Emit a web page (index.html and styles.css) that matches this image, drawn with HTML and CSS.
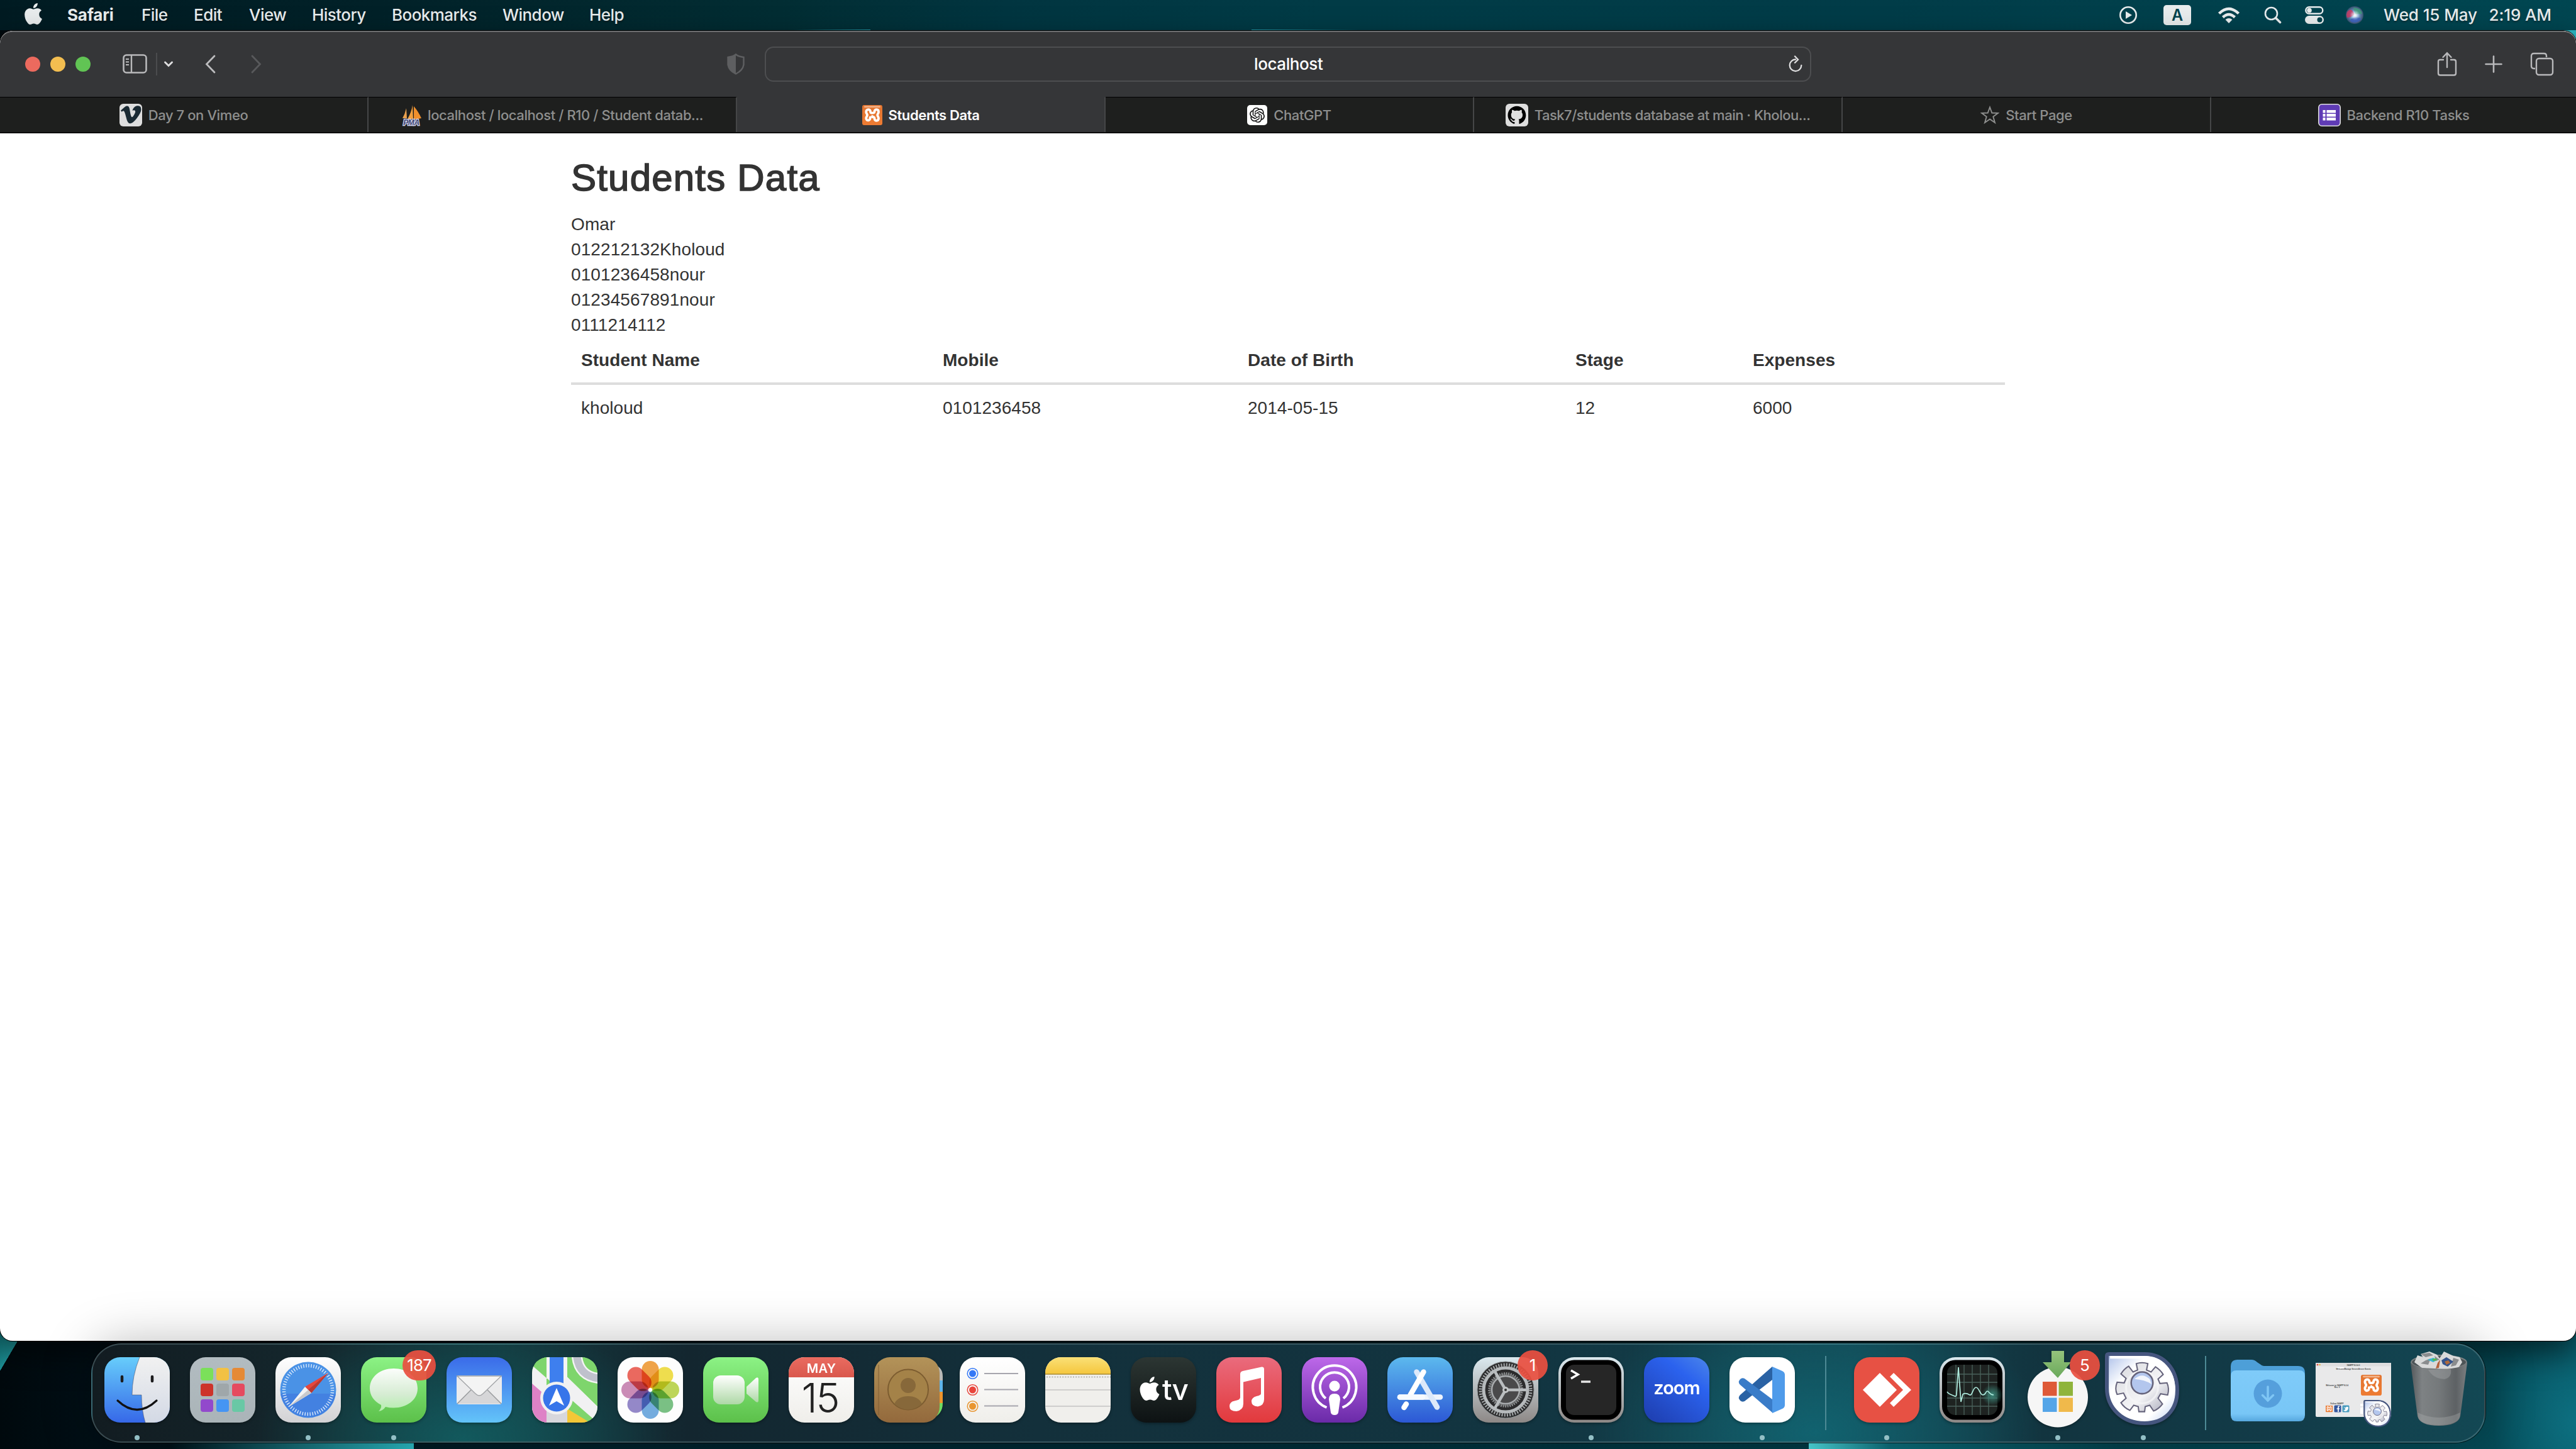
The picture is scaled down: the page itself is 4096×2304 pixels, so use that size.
FILE: index.html
```html
<!DOCTYPE html>
<html lang="en">
<head>
<meta charset="utf-8">
<title>Students Data</title>
<link rel="stylesheet" href="styles.css">
</head>
<body>
<svg class="defs" width="0" height="0" aria-hidden="true">
  <defs>
    <linearGradient id="g-blue" x2="0" y2="1"><stop stop-color="#67cdfb"/><stop offset="1" stop-color="#3668e8"/></linearGradient>
    <linearGradient id="g-mail" x2="0" y2="1"><stop stop-color="#3a6be9"/><stop offset="1" stop-color="#63c4f9"/></linearGradient>
    <linearGradient id="g-face" x2="0" y2="1"><stop stop-color="#f1f1f1"/><stop offset="1" stop-color="#d3d9e5"/></linearGradient>
    <linearGradient id="g-white" x2="0" y2="1"><stop stop-color="#fff"/><stop offset="1" stop-color="#d2d2d4"/></linearGradient>
    <linearGradient id="g-green" x2="0" y2="1"><stop stop-color="#8cf285"/><stop offset="1" stop-color="#5cc04a"/></linearGradient>
    <linearGradient id="g-bubble" x2="0" y2="1"><stop stop-color="#fbfdfb"/><stop offset=".6" stop-color="#d6ecd3"/><stop offset="1" stop-color="#b4eeac"/></linearGradient>
    <linearGradient id="g-cam" x2="0" y2="1"><stop stop-color="#fff"/><stop offset="1" stop-color="#aed8a6"/></linearGradient>
    <linearGradient id="g-red" x2="0" y2="1"><stop stop-color="#ea6b60"/><stop offset="1" stop-color="#d9584d"/></linearGradient>
    <linearGradient id="g-book" x2="0" y2="1"><stop stop-color="#b39359"/><stop offset="1" stop-color="#93693c"/></linearGradient>
    <linearGradient id="g-paper" x2="0" y2="1"><stop stop-color="#fff"/><stop offset="1" stop-color="#efeeea"/></linearGradient>
    <linearGradient id="g-notes" x2="0" y2="1"><stop stop-color="#fae077"/><stop offset="1" stop-color="#f5c63c"/></linearGradient>
    <linearGradient id="g-tv" x2="0" y2="1"><stop stop-color="#2c3633"/><stop offset="1" stop-color="#0d1213"/></linearGradient>
    <linearGradient id="g-music" x2="0" y2="1"><stop stop-color="#ea6b7d"/><stop offset="1" stop-color="#e2393c"/></linearGradient>
    <linearGradient id="g-pod" x2="0" y2="1"><stop stop-color="#bd68e9"/><stop offset="1" stop-color="#6a2aa8"/></linearGradient>
    <linearGradient id="g-app" x2="0" y2="1"><stop stop-color="#5cb9ee"/><stop offset="1" stop-color="#2c58d5"/></linearGradient>
    <linearGradient id="g-rim" x2="0" y2="1"><stop stop-color="#dbe9ef"/><stop offset="1" stop-color="#8d8886"/></linearGradient>
    <linearGradient id="g-zoom" x1="1" y1="0" x2=".2" y2="1"><stop stop-color="#4c86ea"/><stop offset=".35" stop-color="#2b62ee"/><stop offset="1" stop-color="#1f41b4"/></linearGradient>
    <linearGradient id="g-pad" x2="0" y2="1"><stop stop-color="#b2bcc1"/><stop offset="1" stop-color="#aab4b8"/></linearGradient>
    <linearGradient id="g-down" x2="0" y2="1"><stop stop-color="#95c37c"/><stop offset="1" stop-color="#6aa95b"/></linearGradient>
    <linearGradient id="g-fold" x2="0" y2="1"><stop stop-color="#7fcbf9"/><stop offset=".85" stop-color="#78c6f6"/><stop offset="1" stop-color="#57a8df"/></linearGradient>
    <linearGradient id="g-can"><stop stop-color="#55595c"/><stop offset=".2" stop-color="#7e8284"/><stop offset=".5" stop-color="#75797b"/><stop offset=".8" stop-color="#5d6164"/><stop offset="1" stop-color="#7b7f81"/></linearGradient>
    <linearGradient id="g-gear" x2="1" y2="1"><stop stop-color="#d9dade"/><stop offset=".6" stop-color="#f4f4f6"/><stop offset="1" stop-color="#a6a7b8"/></linearGradient>
    <linearGradient id="g-mgr" x2="1" y2="1"><stop stop-color="#a9bde8"/><stop offset=".3" stop-color="#fff"/><stop offset=".75" stop-color="#fff"/><stop offset="1" stop-color="#b4c8ee"/></linearGradient>
    <radialGradient id="g-siri"><stop stop-color="#fff"/><stop offset=".35" stop-color="#7fa9d8"/><stop offset="1" stop-color="#37506f"/></radialGradient>
    <radialGradient id="g-glow"><stop stop-color="#fff"/><stop offset="1" stop-color="#cfe4f5" stop-opacity="0"/></radialGradient>
    <radialGradient id="g-pulse"><stop stop-color="#3c8a7c"/><stop offset="1" stop-color="#3c8a7c" stop-opacity="0"/></radialGradient>
    <linearGradient id="g-xampp" x2="0" y2="1"><stop stop-color="#e27430"/><stop offset="1" stop-color="#ee7c33"/></linearGradient>
    <clipPath id="tile"><rect width="104" height="104" rx="25"/></clipPath>
    <symbol id="apple" viewBox="0 0 24 24"><path d="M12.152 6.896c-.948 0-2.415-1.078-3.96-1.04-2.04.027-3.91 1.183-4.961 3.014-2.117 3.675-.546 9.103 1.519 12.09 1.013 1.454 2.208 3.09 3.792 3.039 1.52-.065 2.09-.987 3.935-.987 1.831 0 2.35.987 3.96.948 1.637-.026 2.676-1.48 3.676-2.948 1.156-1.688 1.636-3.325 1.662-3.415-.039-.013-3.182-1.221-3.22-4.857-.026-3.04 2.48-4.494 2.597-4.559-1.429-2.09-3.623-2.324-4.39-2.376-2-.156-3.675 1.09-4.61 1.09zM15.53 3.83c.843-1.012 1.4-2.427 1.245-3.83-1.207.052-2.662.805-3.532 1.818-.78.896-1.454 2.338-1.273 3.714 1.338.104 2.715-.688 3.559-1.701"/></symbol>
    <symbol id="xampp" viewBox="0 0 32 32">
      <rect width="32" height="32" rx="3" fill="url(#g-xampp)"/><rect x="3" y="1.5" width="26" height="2.5" rx="1" fill="#f3b48a"/>
      <path d="M12.500 19.500C13.500 25.500 6.200 26 6.200 21C6.200 18.500 8 18 8 16S6.200 13.500 6.200 11C6.200 6 13 6 13 10.500C13 12.500 14.500 12.700 16 12.700S19.500 12.500 19.500 10.500C19.500 6 26 6 26 11C26 13.500 24.200 14 24.200 16S26 18.500 26 21C26 26 19.500 26 19.500 21.500C19.500 19.500 18.500 19 16 19V18" fill="none" stroke="#fff" stroke-width="3.800" stroke-linecap="round" stroke-linejoin="round"/>
    </symbol>
    <symbol id="manager" viewBox="0 0 116 114">
      <path d="M6 3H62C92 3 113 26 113 60C113 92 92 111 62 111C28 111 3 88 3 56V6Q3 3 6 3Z" fill="url(#g-mgr)" stroke="#46567f" stroke-width="6"/>
      <path d="M8 8H60C90 8 108 30 108 60" fill="none" stroke="#fff" stroke-width="4"/>
      <g transform="translate(58 55)">
        <path d="M-7-27-9-37Q0-40 9-37L7-27 14-24 21-32Q29-27 33-20L25-13 28-6 39-7Q43 2 40 12L29 10 25 17 32 26Q26 34 18 37L12 28 5 30 4 38-5 38-6 30-13 28-19 36Q-28 32-33 24L-25 17-29 9-39 11Q-43 2-39-8L-28-7-25-14-33-21Q-28-29-21-33L-14-24Z" fill="url(#g-gear)" stroke="#66647c" stroke-width="2"/>
        <circle r="25" fill="none" stroke="#f6f6f8" stroke-width="3" opacity=".7"/>
        <circle cy="-7" r="17" fill="#b3c6ed" stroke="#66647c" stroke-width="2.500"/>
        <path d="M-12-13Q0-24 12-13L15-5Q4-12-12-13Z" fill="#f2f5fc"/>
      </g>
    </symbol>
  </defs>
</svg>

<header class="menubar">
  <svg class="menubar-apple" width="34" height="34"><use href="#apple" fill="#e8eced"/></svg>
  <nav class="menus">
    <span class="menu-app">Safari</span><span>File</span><span>Edit</span><span>View</span><span>History</span><span>Bookmarks</span><span>Window</span><span>Help</span>
  </nav>
  <div class="status">
    <svg width="30" height="30" viewBox="0 0 30 30"><circle cx="15" cy="15" r="12.700" fill="none" stroke="#e8eced" stroke-width="2.600"/><path d="M11 9l10 6-10 6z" fill="#e8eced"/></svg>
    <span class="input-lang">A</span>
    <svg width="36" height="28" viewBox="0 0 36 28"><g fill="none" stroke="#e8eced" stroke-width="4.500"><path d="M2.500 11.500Q18-3.500 33.500 11.500"/><path d="M8.500 17.500Q18 8.500 27.500 17.500"/></g><path d="M12.500 21.200Q18 16.600 23.500 21.200L18 27z" fill="#e8eced"/></svg>
    <svg width="28" height="28" viewBox="0 0 28 28"><circle cx="11.500" cy="11.500" r="9.500" fill="none" stroke="#e8eced" stroke-width="2.600"/><path d="M18.500 18.500l7 7" stroke="#e8eced" stroke-width="3.600" stroke-linecap="round"/></svg>
    <svg width="30" height="28" viewBox="0 0 30 28"><rect x="1.300" y="1.300" width="27" height="10.400" rx="5.200" fill="none" stroke="#e8eced" stroke-width="2.400"/><circle cx="7" cy="6.500" r="3.800" fill="#e8eced"/><rect y="15" width="30" height="13" rx="6.500" fill="#e8eced"/><circle cx="23.500" cy="21.500" r="4" fill="#02434d"/></svg>
    <svg width="28" height="28" viewBox="0 0 28 28"><circle cx="14" cy="14" r="14" fill="url(#g-siri)"/><path d="M3 8Q9 1 14 13Q8 18 2 18Q0 12 3 8Z" fill="#d2365f" opacity=".8"/><path d="M12 2Q24 2 26 12L15 13Z" fill="#3f9c78" opacity=".8"/><path d="M6 22Q16 14 25 20Q18 28 9 25Z" fill="#3b5fc0" opacity=".8"/><circle cx="14.500" cy="14" r="8" fill="url(#g-glow)"/></svg>
    <span class="clock"><span>Wed 15 May</span><span>2:19 AM</span></span>
  </div>
</header>

<main class="window">
  <div class="toolbar">
    <div class="lights"><i class="light light-close"></i><i class="light light-min"></i><i class="light light-max"></i></div>
    <svg class="tb-sidebar" width="40" height="32" viewBox="0 0 40 32"><rect x="1.500" y="1.500" width="36" height="28" rx="4.500" fill="none" stroke="#b9b9bb" stroke-width="2.600"/><path d="M14 2v27" stroke="#b9b9bb" stroke-width="2.400"/><path d="M5 8h5M5 12.500h5M5 17h5" stroke="#b9b9bb" stroke-width="2"/></svg>
    <i class="tb-rule"></i>
    <svg class="tb-menu" width="16" height="12" viewBox="0 0 16 12"><path d="M2.500 3l5.500 5.500L13.500 3" fill="none" stroke="#dededf" stroke-width="3" stroke-linecap="round"/></svg>
    <svg class="tb-back" width="20" height="32" viewBox="0 0 20 32"><path d="M16 3L3.500 16 16 29" fill="none" stroke="#bcbcbe" stroke-width="2.800" stroke-linecap="round"/></svg>
    <svg class="tb-forward" width="20" height="32" viewBox="0 0 20 32"><path d="M4 3l12.500 13L4 29" fill="none" stroke="#58595b" stroke-width="2.800" stroke-linecap="round"/></svg>
    <svg class="tb-shield" width="28" height="34" viewBox="0 0 28 34"><path d="M14 1.500Q18 5 26.500 6V18Q25 27 14 32.500Q3 27 1.500 18V6Q10 5 14 1.500Z" fill="none" stroke="#5e5f61" stroke-width="2.400"/><path d="M14 1.500V32.500Q3 27 1.500 18V6Q10 5 14 1.500Z" fill="#5e5f61"/></svg>
    <div class="address"><span>localhost</span>
      <svg class="reload" width="24" height="28" viewBox="0 0 24 28"><path d="M12 6.500A9.300 9.300 0 1 0 21.300 16" fill="none" stroke="#dededf" stroke-width="2.300" stroke-linecap="round"/><path d="M11 1.500l5 5.200-5 5" fill="none" stroke="#dededf" stroke-width="2.300" stroke-linecap="round"/></svg>
    </div>
    <div class="tb-actions">
      <svg width="32" height="40" viewBox="0 0 32 40"><path d="M10 13H5Q2 13 2 16V34.500Q2 37.500 5 37.500H27Q30 37.500 30 34.500V16Q30 13 27 13H22M16 25V3M9.500 9L16 2.200 22.500 9" fill="none" stroke="#b9b9bb" stroke-width="2.400" stroke-linecap="round"/></svg>
      <svg width="30" height="30" viewBox="0 0 30 30"><path d="M15 2.500v25M2.500 15h25" stroke="#b9b9bb" stroke-width="2.600" stroke-linecap="round"/></svg>
      <svg width="38" height="38" viewBox="0 0 38 38"><path d="M8 26H6Q2 26 2 22V6Q2 2 6 2H22Q26 2 26 6V8" fill="none" stroke="#b9b9bb" stroke-width="2.400"/><rect x="10" y="10" width="26" height="26" rx="4" fill="none" stroke="#b9b9bb" stroke-width="2.400"/></svg>
    </div>
  </div>
  <div class="tabs">
    <div class="tab"><svg width="36" height="36" viewBox="0 0 36 36"><rect width="36" height="36" rx="6" fill="#dedede"/><path transform="translate(2 1) scale(1.350)" fill="#1a2a33" d="M23.9765 6.4168c-.105 2.338-1.739 5.5429-4.894 9.6088-3.2679 4.247-6.0258 6.3699-8.2898 6.3699-1.409 0-2.578-1.294-3.553-3.881l-1.9179-7.1138c-.719-2.584-1.488-3.878-2.312-3.878-.179 0-.806.378-1.8809 1.132l-1.129-1.457a315.06 315.06 0 003.501-3.1279c1.579-1.368 2.765-2.085 3.5539-2.159 1.867-.18 3.016 1.1 3.447 3.838.465 2.953.789 4.789.971 5.5069.5389 2.45 1.1309 3.674 1.7759 3.674.502 0 1.256-.796 2.265-2.385 1.004-1.589 1.54-2.797 1.612-3.628.144-1.371-.395-2.061-1.614-2.061-.574 0-1.167.121-1.777.391 1.186-3.8679 3.434-5.7568 6.7619-5.6368 2.4729.06 3.6279 1.664 3.4929 4.7969z"/></svg><span>Day 7 on Vimeo</span></div>
    <div class="tab"><svg width="32" height="36" viewBox="0 0 32 36"><path d="M8 7L9 23H2Q6 16 8 7Z" fill="#e9a04e"/><path d="M18 2L19 24H10Q16 14 18 2Z" fill="#f2a03f"/><path d="M20 4Q27 12 32 23L20 25Z" fill="#ef8f2c"/><text x="16" y="34" class="pma">PMA</text></svg><span>localhost / localhost / R10 / Student datab...</span></div>
    <div class="tab tab-active"><svg width="32" height="32"><use href="#xampp"/></svg><span>Students Data</span></div>
    <div class="tab"><svg width="32" height="32" viewBox="0 0 32 32"><rect width="32" height="32" rx="5" fill="#fff"/><path transform="translate(4 4)" fill="#111" d="M22.2819 9.8211a5.9847 5.9847 0 0 0-.5157-4.9108 6.0462 6.0462 0 0 0-6.5098-2.9A6.0651 6.0651 0 0 0 4.9807 4.1818a5.9847 5.9847 0 0 0-3.9977 2.9 6.0462 6.0462 0 0 0 .7427 7.0966 5.98 5.98 0 0 0 .511 4.9107 6.051 6.051 0 0 0 6.5146 2.9001A5.9847 5.9847 0 0 0 13.2599 24a6.0557 6.0557 0 0 0 5.7718-4.2058 5.9894 5.9894 0 0 0 3.9977-2.9001 6.0557 6.0557 0 0 0-.7475-7.0729zm-9.022 12.6081a4.4755 4.4755 0 0 1-2.8764-1.0408l.1419-.0804 4.7783-2.7582a.7948.7948 0 0 0 .3927-.6813v-6.7369l2.02 1.1686a.071.071 0 0 1 .038.052v5.5826a4.504 4.504 0 0 1-4.4945 4.4944zm-9.6607-4.1254a4.4708 4.4708 0 0 1-.5346-3.0137l.142.0852 4.783 2.7582a.7712.7712 0 0 0 .7806 0l5.8428-3.3685v2.3324a.0804.0804 0 0 1-.0332.0615L9.74 19.9502a4.4992 4.4992 0 0 1-6.1408-1.6464zM2.3408 7.8956a4.485 4.485 0 0 1 2.3655-1.9728V11.6a.7664.7664 0 0 0 .3879.6765l5.8144 3.3543-2.0201 1.1685a.0757.0757 0 0 1-.071 0l-4.8303-2.7865A4.504 4.504 0 0 1 2.3408 7.872zm16.5963 3.8558L13.1038 8.364 15.1192 7.2a.0757.0757 0 0 1 .071 0l4.8303 2.7913a4.4944 4.4944 0 0 1-.6765 8.1042v-5.6772a.79.79 0 0 0-.407-.667zm2.0107-3.0231l-.142-.0852-4.7735-2.7818a.7759.7759 0 0 0-.7854 0L9.409 9.2297V6.8974a.0662.0662 0 0 1 .0284-.0615l4.8303-2.7866a4.4992 4.4992 0 0 1 6.6802 4.66zM8.3065 12.863l-2.02-1.1638a.0804.0804 0 0 1-.038-.0567V6.0742a4.4992 4.4992 0 0 1 7.3757-3.4537l-.142.0805L8.704 5.459a.7948.7948 0 0 0-.3927.6813zm1.0976-2.3654l2.602-1.4998 2.6069 1.4998v2.9994l-2.5974 1.4997-2.6067-1.4997Z"/></svg><span>ChatGPT</span></div>
    <div class="tab"><svg width="36" height="36" viewBox="0 0 36 36"><rect width="36" height="36" rx="6" fill="#dedede"/><path transform="translate(3.500 3.500) scale(1.200)" d="M12 .297c-6.630 0-12 5.373-12 12 0 5.303 3.438 9.800 8.205 11.385.6.113.82-.258.82-.577 0-.285-.01-1.040-.015-2.040-3.338.724-4.042-1.610-4.042-1.610C4.422 18.070 3.633 17.700 3.633 17.700c-1.087-.744.084-.729.084-.729 1.205.084 1.838 1.236 1.838 1.236 1.070 1.835 2.809 1.305 3.495.998.108-.776.417-1.305.76-1.605-2.665-.3-5.466-1.332-5.466-5.930 0-1.310.465-2.380 1.235-3.220-.135-.303-.54-1.523.105-3.176 0 0 1.005-.322 3.300 1.230.96-.267 1.980-.399 3-.405 1.020.006 2.040.138 3 .405 2.280-1.552 3.285-1.230 3.285-1.230.645 1.653.24 2.873.12 3.176.765.84 1.230 1.910 1.230 3.220 0 4.610-2.805 5.625-5.475 5.920.42.36.81 1.096.81 2.220 0 1.606-.015 2.896-.015 3.286 0 .315.21.69.825.57C20.565 22.092 24 17.592 24 12.297c0-6.627-5.373-12-12-12"/></svg><span class="t-git">Task7/students database at main · Kholou...</span></div>
    <div class="tab"><svg width="30" height="30" viewBox="0 0 30 30"><path d="M15 2.500L18.300 11.500 28 11.800 20.300 17.600 23 27 15 21.500 7 27 9.700 17.600 2 11.800 11.700 11.500Z" fill="none" stroke="#8e8f8e" stroke-width="1.900"/></svg><span>Start Page</span></div>
    <div class="tab"><svg width="36" height="36" viewBox="0 0 36 36"><rect x=".8" y=".8" width="34.400" height="34.400" rx="5" fill="#5f3bb5" stroke="#dedede" stroke-width="1.600"/><path d="M7.500 10h4v4.500h-4zM7.500 16h4v4.500h-4zM7.500 22h4v4.500h-4zM13.500 10h14.500v4.500H13.500zM13.500 16h14.500v4.500H13.500zM13.500 22h14.500v4.500H13.500z" fill="#fff"/></svg><span>Backend R10 Tasks</span></div>
  </div>
  <section class="page">
    <h2>Students Data</h2>
    <p>Omar<br>012212132Kholoud<br>0101236458nour<br>01234567891nour<br>0111214112</p>
    <table>
      <colgroup><col class="c-name"><col class="c-mobile"><col class="c-birth"><col class="c-stage"><col></colgroup>
      <thead><tr><th>Student Name</th><th>Mobile</th><th>Date of Birth</th><th>Stage</th><th>Expenses</th></tr></thead>
      <tbody><tr><td>kholoud</td><td>0101236458</td><td>2014-05-15</td><td>12</td><td>6000</td></tr></tbody>
    </table>
  </section>
</main>

<footer class="dock">
  <div class="slot running"><svg class="icon" viewBox="0 0 104 104"><g clip-path="url(#tile)"><rect width="104" height="104" fill="url(#g-blue)"/><path d="M56 0Q44 30 44 60H59Q59 84 65 104H104V0Z" fill="url(#g-face)"/></g><path d="M56 0Q44 30 44 60H59Q59 84 65 104" fill="none" stroke="#445" stroke-width="1" opacity=".5"/><path d="M28 31v7M76 31v7" stroke="#1c1c1e" stroke-width="4.500" stroke-linecap="round"/><path d="M21 69Q52 98 83 69" fill="none" stroke="#111" stroke-width="3.200" stroke-linecap="round"/></svg></div>
  <div class="slot"><svg class="icon" viewBox="0 0 104 104"><rect width="104" height="104" rx="25" fill="url(#g-pad)"/><g><rect x="17" y="17" width="20" height="20" rx="4" fill="#7be05a"/><rect x="42" y="17" width="20" height="20" rx="4" fill="#f2c144"/><rect x="67" y="17" width="20" height="20" rx="4" fill="#e58a36"/><rect x="17" y="42" width="20" height="20" rx="4" fill="#cd332b"/><rect x="42" y="42" width="20" height="20" rx="4" fill="#9fa7aa"/><rect x="67" y="42" width="20" height="20" rx="4" fill="#e54a5f"/><rect x="17" y="67" width="20" height="20" rx="4" fill="#9249cc"/><rect x="42" y="67" width="20" height="20" rx="4" fill="#4595f3"/><rect x="67" y="67" width="20" height="20" rx="4" fill="#69c8a5"/></g></svg></div>
  <div class="slot running"><svg class="icon" viewBox="0 0 104 104"><rect width="104" height="104" rx="25" fill="url(#g-white)"/><circle cx="52" cy="52" r="44.500" fill="#4a92e6"/><path d="M8 58a44.500 44.500 0 0 0 88 0Z" fill="#3f76de" opacity=".6"/><circle cx="52" cy="52" r="38.500" fill="none" stroke="#dcebfb" stroke-width="5.500" stroke-dasharray="1.400 2.632"/><path d="M84 25L57 57 47 47Z" fill="#e5473d"/><path d="M84 25L57 57 52 52Z" fill="#b93a32"/><path d="M21 79L47 47 57 57Z" fill="#f4f4f4"/><path d="M21 79L52 52 57 57Z" fill="#c9c9cb"/></svg></div>
  <div class="slot running"><svg class="icon" viewBox="0 0 104 104"><rect width="104" height="104" rx="25" fill="url(#g-green)"/><path d="M52 18C73 18 90 31 90 49.500S73 80.500 52 80.500Q45 80.500 39 79Q35 85 28 86Q33 81 32 76C20 70 14 60 14 49.500C14 31 31 18 52 18Z" fill="url(#g-bubble)"/></svg><b class="badge badge-wide">187</b></div>
  <div class="slot"><svg class="icon" viewBox="0 0 104 104"><rect width="104" height="104" rx="25" fill="url(#g-mail)"/><rect x="16" y="29" width="72" height="46" rx="4" fill="#ebebec"/><path d="M17 74L40 52 64 52 87 74Z" fill="#d6d6d8"/><path d="M17 74L39 52M87 74L65 52" stroke="#97999c" stroke-width="1.500"/><path d="M17 30L46 58Q52 64 58 58L87 30Z" fill="#f4f4f4" stroke="#a3a5a8" stroke-width="1.400"/></svg></div>
  <div class="slot"><svg class="icon" viewBox="0 0 104 104"><g clip-path="url(#tile)"><rect width="104" height="104" fill="#7ed56c"/><path d="M0 13L104 104V78L24 0H23V104H0Z" fill="#f1f1f2"/><path d="M0 42L23 62V104H0Z" fill="#de82c6"/><path d="M23 70H56V104H23Z" fill="#d7d7dc"/><path d="M56 82L92 104H56Z" fill="#f3c737"/><path d="M0 0H23V24L0 8Z" fill="#7ed56c"/><path d="M56 31L104 78V0H56Z" fill="#7ed56c"/><path d="M23 0H56V34H23Z" fill="#f4f4f4"/><path d="M28 0H50V60H28Z" fill="#3e7fee"/><path d="M71-5Q73 32 110 34" fill="none" stroke="#f4f4f4" stroke-width="17"/><path d="M71-5Q73 32 110 34" fill="none" stroke="#bfc1cc" stroke-width="12"/></g><circle cx="39" cy="65" r="26" fill="#f1f1f1"/><circle cx="39" cy="65" r="21.500" fill="#3775ea"/><path d="M39 49L51 77 39 70 27 77Z" fill="#fff"/></svg></div>
  <div class="slot"><svg class="icon" viewBox="0 0 104 104"><rect width="104" height="104" rx="25" fill="#fdfdfd"/><g class="petals"><rect x="38.500" y="6" width="27" height="43" rx="13.500" fill="#f09a35"/><rect x="38.500" y="6" width="27" height="43" rx="13.500" fill="#efdc3a" transform="rotate(45 52 52)"/><rect x="38.500" y="6" width="27" height="43" rx="13.500" fill="#b8d348" transform="rotate(90 52 52)"/><rect x="38.500" y="6" width="27" height="43" rx="13.500" fill="#6cbb78" transform="rotate(135 52 52)"/><rect x="38.500" y="6" width="27" height="43" rx="13.500" fill="#66a5dd" transform="rotate(180 52 52)"/><rect x="38.500" y="6" width="27" height="43" rx="13.500" fill="#8a7cc4" transform="rotate(225 52 52)"/><rect x="38.500" y="6" width="27" height="43" rx="13.500" fill="#c781b0" transform="rotate(270 52 52)"/><rect x="38.500" y="6" width="27" height="43" rx="13.500" fill="#ea5a4f" transform="rotate(315 52 52)"/></g></svg></div>
  <div class="slot"><svg class="icon" viewBox="0 0 104 104"><rect width="104" height="104" rx="25" fill="url(#g-green)"/><rect x="16" y="29" width="50" height="46" rx="12" fill="url(#g-cam)"/><path d="M69 47L84 33Q88 31 88 35V69Q88 73 84 71L69 58Z" fill="url(#g-cam)"/></svg></div>
  <div class="slot"><svg class="icon" viewBox="0 0 104 104"><rect width="104" height="104" rx="25" fill="url(#g-paper)"/><path d="M0 32V25A25 25 0 0 1 25 0H79A25 25 0 0 1 104 25V32Z" fill="url(#g-red)"/><text x="52" y="25" class="cal-month">MAY</text><text x="50" y="88" class="cal-day">15</text></svg></div>
  <div class="slot"><svg class="icon" viewBox="0 0 104 104"><path d="M90 10Q109 14 109 30V38H90Z" fill="#b9b9b6"/><path d="M90 37H109V55H90Z" fill="#5eb4ea"/><path d="M90 55H109V73H90Z" fill="#ee952c"/><path d="M90 73H109Q109 92 90 98Z" fill="#6fdb62"/><rect width="104" height="104" rx="25" fill="url(#g-book)"/><path d="M7 12V92" stroke="#7d5c34" stroke-width="1.500" opacity=".6"/><circle cx="54" cy="51.500" r="32" fill="#a48248" stroke="#7c5c30" stroke-width="2"/><circle cx="54" cy="45" r="12" fill="#87683a"/><path d="M32 74Q38 62 54 62T76 74Q54 93 32 74Z" fill="#87683a"/></svg></div>
  <div class="slot"><svg class="icon" viewBox="0 0 104 104"><rect width="104" height="104" rx="25" fill="url(#g-paper)"/><path d="M39 26H93M39 51.500H93M39 77.500H93" stroke="#a7a6ae" stroke-width="1.800"/><g fill="#3478f6" stroke="#3478f6"><circle cx="20.500" cy="26" r="5.500" stroke="none"/><circle cx="20.500" cy="26" r="8.300" fill="none" stroke-width="1.500"/></g><g fill="#e8453c" stroke="#e8453c"><circle cx="20.500" cy="52" r="5.500" stroke="none"/><circle cx="20.500" cy="52" r="8.300" fill="none" stroke-width="1.500"/></g><g fill="#e8952f" stroke="#e8952f"><circle cx="20.500" cy="78" r="5.500" stroke="none"/><circle cx="20.500" cy="78" r="8.300" fill="none" stroke-width="1.500"/></g></svg></div>
  <div class="slot"><svg class="icon" viewBox="0 0 104 104"><g clip-path="url(#tile)"><rect width="104" height="104" fill="#f0efec"/><rect width="104" height="27" fill="url(#g-notes)"/><path d="M0 27H104" stroke="#a98b35" stroke-width="1.400"/><path d="M2 31.500H104" stroke="#b5b4b0" stroke-width="2" stroke-dasharray="2 2.200"/><path d="M0 52H104M0 78H104" stroke="#cfcecd" stroke-width="1.800"/></g></svg></div>
  <div class="slot"><svg class="icon" viewBox="0 0 104 104"><rect width="104" height="104" rx="25" fill="url(#g-tv)"/><use href="#apple" x="11" y="31" width="38" height="38" fill="#fff"/><text x="50" y="68" class="tv">tv</text></svg></div>
  <div class="slot"><svg class="icon" viewBox="0 0 104 104"><rect width="104" height="104" rx="25" fill="url(#g-music)"/><path d="M38 27Q38 23 42 22L72 15.500Q76 15 76 19V67Q76 77 66 78.500Q56 78 56 70.500Q56 64 64 62Q71 60.500 71 58V33L43 39.500V74Q43 84 32 86Q21 86 21 78Q21 71 29 69.500Q38 68 38 64Z" fill="#fff"/></svg></div>
  <div class="slot"><svg class="icon" viewBox="0 0 104 104"><rect width="104" height="104" rx="25" fill="url(#g-pod)"/><g fill="none" stroke="#fff" stroke-width="4"><path d="M39.500 80A34.500 34.500 0 1 1 64.500 80"/><path d="M38 65.500A23 23 0 1 1 66 65.500"/></g><circle cx="52" cy="46" r="8.500" fill="#fff"/><path d="M43 67Q43 58 52 58T61 67L58 88Q57 92 52 92T46 88Z" fill="#fff"/></svg></div>
  <div class="slot"><svg class="icon" viewBox="0 0 104 104"><rect width="104" height="104" rx="25" fill="url(#g-app)"/><g stroke-linecap="round" stroke-width="8.500"><path d="M20 63.500H84" stroke="#eef4fc"/><path d="M46.500 23.500L79 79.500" stroke="#dce9fa"/><path d="M57.500 23.500L36.500 60M30 74.500L26.500 80" stroke="#fff"/><path d="M20 63.500H56" stroke="#f6faff"/></g></svg></div>
  <div class="slot"><svg class="icon" viewBox="0 0 104 104"><rect width="104" height="104" rx="25" fill="url(#g-rim)"/><circle cx="52" cy="52" r="45" fill="#2b2b2c" stroke="#8e9496" stroke-width="1"/><circle cx="52" cy="52" r="40" fill="none" stroke="#a3a7a9" stroke-width="5" stroke-dasharray="2 2.200"/><circle cx="52" cy="52" r="35" fill="none" stroke="#b6babc" stroke-width="5"/><circle cx="52" cy="52" r="26" fill="#5a5b5c" stroke="#8e9192" stroke-width="4" stroke-dasharray="1.800 1.800"/><circle cx="52" cy="52" r="22" fill="#4a4a4b" stroke="#a9acae" stroke-width="2.500"/><path d="M52 52H85M52 52L35 23M52 52L35 81" stroke="#b9bdbf" stroke-width="4.500"/><circle cx="52" cy="52" r="5" fill="#c2c5c6"/><circle cx="52" cy="52" r="2" fill="#333"/></svg><b class="badge">1</b></div>
  <div class="slot running"><svg class="icon" viewBox="0 0 104 104"><rect width="104" height="104" rx="25" fill="url(#g-rim)"/><rect x="4" y="4.500" width="96" height="95" rx="21" fill="#000"/><rect x="12" y="12" width="80" height="80" rx="13" fill="#262626"/><path d="M20 21l11 6.500-11 6.500" fill="none" stroke="#fff" stroke-width="3.500"/><path d="M36 39h15" stroke="#e6e6e6" stroke-width="3.500"/></svg></div>
  <div class="slot"><svg class="icon" viewBox="0 0 104 104"><rect width="104" height="104" rx="25" fill="url(#g-zoom)"/><text x="52" y="59" class="zoom">zoom</text></svg></div>
  <div class="slot running"><svg class="icon" viewBox="0 0 104 104"><rect width="104" height="104" rx="25" fill="#fff"/><path d="M68 15V36L24 70Q20 72 17 69L15 66Q14 63 17 60Z" fill="#2a62a4"/><path d="M68 88V67L24 34Q20 32 17 35L15 38Q14 41 17 44Z" fill="#3a7cc8"/><path d="M68 15L84 22Q88 24 88 28V76Q88 80 84 82L68 89Z" fill="#4f9bea"/></svg></div>
  <i class="rule"></i>
  <div class="slot running"><svg class="icon" viewBox="0 0 104 104"><rect width="104" height="104" rx="25" fill="#e75144"/><path d="M41 25L68 52 41 79 14 52ZM57 31L63 25 91 52 63 79 57 73 78 52Z" fill="#fff"/></svg></div>
  <div class="slot"><svg class="icon" viewBox="0 0 104 104"><rect width="104" height="104" rx="25" fill="url(#g-rim)"/><rect x="4" y="4.500" width="96" height="95" rx="21" fill="#000"/><rect x="12" y="12" width="80" height="80" rx="13" fill="#1e2321"/><path d="M26 12v80M39 12v80M52 12v80M65 12v80M78 12v80M12 27h80M12 40h80M12 65h80M12 78h80" stroke="#4a625b" stroke-width="1.300"/><circle cx="84" cy="60" r="17" fill="url(#g-pulse)"/><path d="M12 55q2 3 5 4l7 3q3 1 3-3l3-43 4 55 3-12q4-3 11 1c4 2 5-12 10-12s6 12 11 12 4-6 7-6 3 6 10 6" fill="none" stroke="#aeeadd" stroke-width="1.700"/></svg></div>
  <div class="slot running"><svg class="icon" viewBox="0 0 104 104"><circle cx="52" cy="63.500" r="48" fill="#f6f6f6"/><path d="M28 39H50.500V61.500H28Z" fill="#de5a38"/><path d="M53.500 39H76V61.500H53.500Z" fill="#8fb43c"/><path d="M28 64.500H50.500V87H28Z" fill="#54a5e8"/><path d="M53.500 64.500H76V87H53.500Z" fill="#f0b94b"/><path d="M42-10H62V8H73L52 33 28 8H42Z" fill="url(#g-down)"/></svg><b class="badge">5</b></div>
  <div class="slot running"><svg class="icon manager"><use href="#manager"/></svg></div>
  <i class="rule rule-end"></i>
  <div class="slot"><svg class="folder" width="120" height="100" viewBox="0 0 120 100"><path d="M1 12Q1 1 12 1H34Q39 1 43 5L49 9Q51 11 56 11H108Q119 11 119 22V90H1Z" fill="#4d9fd8"/><path d="M1 27Q1 18 10 18H110Q119 18 119 27V89Q119 99 109 99H11Q1 99 1 89Z" fill="url(#g-fold)"/><circle cx="60" cy="55" r="22.500" fill="#559fdc"/><path d="M60 44V65M51.500 57.500L60 66 68.500 57.500" fill="none" stroke="#7fc6f5" stroke-width="3.500" stroke-linecap="round"/></svg></div>
  <div class="slot"><svg class="thumb" width="122" height="104" viewBox="0 0 122 104"><rect width="120" height="86" rx="2" fill="#e9e9ea"/><path d="M0 0H120V5.500H0Z" fill="#dededf"/><circle cx="3" cy="3" r="1.300" fill="#e8453c"/><circle cx="6.500" cy="3" r="1.300" fill="#eebb3c"/><g class="mini"><text x="60" y="4.500">XAMPP 8.2.4-0</text><rect x="33" y="7" width="12" height="4" rx="1" fill="#fff"/><text x="39" y="10.500">Welcome</text><text x="57" y="10.500">Manage Servers</text><text x="78" y="10.500">Server Events</text><text x="34" y="36.500">Welcome to XAMPP 8.2.4</text><text x="34" y="39.500">Rev. 0</text><text x="34" y="66">Follow XAMPP</text></g><path d="M71 65h8v4h-8zM71 71h8v10h-8z" fill="#fff"/><use href="#xampp" x="72" y="19" width="33" height="33"/><use href="#xampp" x="16" y="67.500" width="11" height="11"/><rect x="29.500" y="67.500" width="11" height="11" rx="1.500" fill="#35579e"/><path d="M36 78V70.500Q36 69 38 69M33.500 73H38" stroke="#fff" stroke-width="1.700" fill="none"/><rect x="42.500" y="67.500" width="11" height="11" rx="1.500" fill="#4b9cbf"/><path d="M44 75.500Q47 75 47.500 73L44.500 70.500Q48 72 48.500 70.500T52 70.500Q52 77 47 77Z" fill="#fff"/><use href="#manager" x="75" y="59" width="46" height="43"/></svg></div>
  <div class="slot"><svg class="trash" width="94" height="122" viewBox="0 0 94 122"><ellipse cx="47" cy="18" rx="44" ry="11" fill="#4d5457" stroke="#7b8183" stroke-width="2"/><path d="M8 18L13 7 22 10 18 5 32 1 44 6 48 12 55 1 70 8 80 10 84 18 78 27 60 29 20 27Z" fill="#d9dada"/><path d="M18 5l14-2 6 4-12 3zM26 15l8-3-4 10-12-2zM70 11l9 3-5 9-8 2zM40 8l8 6-6 2z" fill="#8a8c8e"/><path d="M29 14l9-3 7 3-7 4z" fill="#35b5d4"/><path d="M36 13l7-1 1 3-6 1z" fill="#58b54a"/><path d="M51 15l8-5 11 7-9 8-8-4z" fill="#34548c"/><path d="M56 17l6-2 3 4-6 3z" fill="#b06a3a"/><path d="M45 19l4-5-2 13-5 1z" fill="#b5623c"/><path d="M2 19Q12 29 47 29T92 19L81 104Q77 119 47 119T13 104Z" fill="url(#g-can)"/><path d="M30 30Q38 44 56 45Q68 42 66 29Z" fill="#a1a5a7" opacity=".45"/><path d="M13 98Q47 114 81 98L80 106Q75 118 47 118T14 106Z" fill="#b5b8ba" opacity=".3"/></svg></div>
</footer>
</body>
</html>
```
FILE: styles.css
```css
* { box-sizing: border-box; }
body {
  margin: 0;
  width: 4096px;
  height: 2304px;
  overflow: hidden;
  display: flex;
  flex-direction: column;
  font-family: Inter, "Noto Sans", sans-serif;
  background:
    linear-gradient(to bottom right, #0f6a6e 0, #1d9297 49.8%, transparent 50.2%) 0 2112px / 40px 68px no-repeat,
    radial-gradient(ellipse 130px 170px at 4096px 2262px, #0d6f80, transparent) no-repeat,
    linear-gradient(90deg, transparent 0, #2bbcc6 100%) 270px 2294px / 388px 10px no-repeat,
    linear-gradient(90deg, #4fe0e4, #0c6d7a 130px, transparent 500px) 2876px 2294px / 520px 10px no-repeat,
    linear-gradient(#2ab5c0, #2ab5c0) 4066px 48px / 30px 40px no-repeat,
    linear-gradient(90deg, #00090d 0, #000f16 150px, #01202a 900px, #012d38 2000px, #023d48 3000px, #054a56 3950px, #075866 4096px);
}
.defs { position: absolute; }

.menubar {
  flex: none;
  height: 48px;
  display: flex;
  align-items: center;
  padding: 0 39px 0 36px;
  color: #e8eced;
  font-size: 26px;
  font-weight: 500;
  text-shadow: 0 2px 3px rgba(0, 0, 0, .35);
  background:
    linear-gradient(90deg, transparent, #2aa4b4) 1260px 47px / 124px 1px no-repeat,
    linear-gradient(90deg, #2aa4b4, transparent) 1990px 47px / 170px 1px no-repeat,
    linear-gradient(90deg, #001b22 0, #012128 600px, #022d33 1240px, #013540 1600px, #013b46 2100px, #013c48 3000px, #004651 4096px);
}
.menubar-apple { margin-top: -4px; }
.menus {
  display: grid;
  grid-template-columns: 118px 83px 88px 100px 127px 176px 138px 80px;
  margin-left: 37px;
  padding-bottom: 2px;
  white-space: nowrap;
  letter-spacing: -.55px;
}
.menu-app { font-weight: 700; letter-spacing: -.2px; }
.status { margin-left: auto; display: flex; align-items: center; white-space: nowrap; }
.status > :nth-child(2) { margin-left: 41px; }
.status > :nth-child(3) { margin-left: 42px; }
.status > :nth-child(4) { margin-left: 38px; }
.status > :nth-child(5) { margin-left: 37px; }
.status > :nth-child(6) { margin-left: 35px; }
.input-lang {
  width: 44px; height: 32px; border-radius: 5px;
  background: #e8eced; color: #02434d;
  font-size: 25px; font-weight: 600; line-height: 32px;
  text-align: center; text-shadow: none;
}
.clock { display: flex; justify-content: space-between; width: 267px; margin-left: 32px; padding-bottom: 2px; letter-spacing: -.1px; }

.window {
  flex: none;
  height: 2083px;
  margin-top: 1px;
  display: flex;
  flex-direction: column;
  border-radius: 20px;
  overflow: hidden;
  background: #fff;
  box-shadow: 0 0 0 1px #000, 0 20px 50px rgba(0, 0, 0, .55);
}
.toolbar {
  flex: none;
  height: 105px;
  display: flex;
  align-items: center;
  padding: 0 35px 2px 40px;
  background: #353638;
  border-top: 2px solid #6d6e70;
  border-radius: 20px 20px 0 0;
}
.lights { display: flex; gap: 16px; }
.light { width: 24px; height: 24px; border-radius: 50%; }
.light-close { background: #ec6a5e; }
.light-min { background: #f3be50; }
.light-max { background: #61c454; }
.tb-sidebar { margin-left: 51px; }
.tb-rule { width: 2px; height: 36px; margin-left: 13px; background: #4b4c4e; }
.tb-menu { margin-left: 10px; }
.tb-back { margin-left: 49px; }
.tb-forward { margin-left: 52px; }
.tb-shield { margin-left: 739px; }
.address {
  width: 1664px;
  height: 56px;
  margin-left: 32px;
  display: flex;
  align-items: center;
  border: 2px solid #4d4e50;
  border-radius: 14px;
  color: #fff;
  font-size: 26px;
  font-weight: 500;
  letter-spacing: -.4px;
}
.address span { margin-left: 776px; }
.reload { margin-left: auto; margin-right: 11px; }
.tb-actions { margin-left: auto; display: flex; align-items: center; gap: 43px; }

.tabs {
  flex: none;
  height: 58px;
  display: grid;
  grid-template-columns: repeat(6, 586px) 1fr;
  border-bottom: 2px solid #0b0b0b;
  font-size: 22px;
  font-weight: 500;
  color: #8e8f8e;
}
.tab {
  min-width: 0;
  display: flex;
  align-items: center;
  justify-content: center;
  gap: 10px;
  white-space: nowrap;
  background: #1e1f1e;
  border-top: 1px solid #000;
  border-right: 2px solid #454647;
  letter-spacing: -.4px;
}
.tab:last-child { border-right: 0; }
.tab-active { background: #353638; border-top-color: #353638; color: #fff; font-weight: 600; }
.t-git { letter-spacing: -.48px; }
.pma { font: italic 800 12px "Liberation Sans", sans-serif; text-anchor: middle; fill: #3d4574; stroke: #d8daf0; stroke-width: 2.5px; paint-order: stroke; }

.page {
  width: 2280px;
  margin: 38px auto 0 908px;
  color: #333;
  font: 28px/40px "Liberation Sans", Arial, sans-serif;
}
.page h2 { margin: 0 0 21px; font-size: 60px; font-weight: 400; line-height: 66px; letter-spacing: 1.2px; -webkit-text-stroke: 1.6px #333; }
.page p { margin: 0 0 -1px; letter-spacing: .1px; }
.page table { width: 100%; table-layout: fixed; border-collapse: separate; border-spacing: 0; text-align: left; }
.page th, .page td { padding: 17px 16px 15px; letter-spacing: .05px; }
.page th { border-bottom: 4px solid #ddd; font-weight: 700; }
.c-name { width: 575px; }
.c-mobile { width: 485px; }
.c-birth { width: 521px; }
.c-stage { width: 282px; }

.dock {
  flex: none;
  position: relative;
  width: 3807px;
  height: 158px;
  margin: 4px 0 0 145px;
  padding-left: 3px;
  display: flex;
  border: 2px solid rgba(140, 175, 180, .32);
  border-radius: 48px;
  background:
    radial-gradient(ellipse 330px 190px at 590px 150px, #12595d, transparent),
    radial-gradient(ellipse 360px 230px at 2740px 140px, #11626f, transparent),
    linear-gradient(90deg, #121c21 0, #14262c 330px, #14383d 650px, #13262f 950px, #13303b 1500px, #123541 2300px, #134550 2800px, #12343f 3100px, #123c49 3500px, #134854 3807px);
  box-shadow: 0 0 0 1px rgba(0, 0, 0, .6), 0 0 80px rgba(0, 0, 0, .28);
}
.slot { position: relative; flex: none; width: 136px; display: flex; justify-content: center; align-items: flex-start; padding-top: 20px; }
.icon { flex: none; width: 104px; height: 104px; overflow: visible; filter: drop-shadow(0 2px 2px rgba(0, 0, 0, .3)); }
.manager { width: 118px; height: 116px; margin-top: -8px; margin-left: -4px; }
.running::after { content: ""; position: absolute; left: 64px; top: 144px; width: 8px; height: 8px; border-radius: 50%; background: #93bfc5; }
.badge {
  position: absolute; left: 87px; top: 9px;
  width: 48px; height: 48px; border-radius: 24px;
  background: rgba(233, 80, 65, .93); color: #fff;
  font-size: 26px; font-weight: 400; line-height: 48px; text-align: center;
}
.badge-wide { left: 82px; width: 53px; letter-spacing: -1px; }
.rule { flex: none; width: 2px; height: 118px; margin: 18px 28px 0 32px; background: #4d8a95; }
.rule-end { margin: 18px 30px 0; }
.folder { margin-top: 3px; }
.thumb { margin-top: 9px; margin-left: 2px; }
.trash { margin-top: -10px; }
.petals rect { mix-blend-mode: multiply; opacity: .9; }
.cal-month { font: 600 20px Inter, sans-serif; text-anchor: middle; fill: #fff; letter-spacing: .3px; }
.cal-day { font: 300 64px Inter, sans-serif; text-anchor: middle; fill: #222; letter-spacing: -2px; }
.tv { font: 500 46px Inter, sans-serif; fill: #fff; letter-spacing: -1px; }
.zoom { font: 600 29px Inter, sans-serif; text-anchor: middle; fill: #fff; letter-spacing: -1px; }
.mini text { font: 600 3px "Liberation Sans", sans-serif; fill: #444; text-anchor: middle; }
```
